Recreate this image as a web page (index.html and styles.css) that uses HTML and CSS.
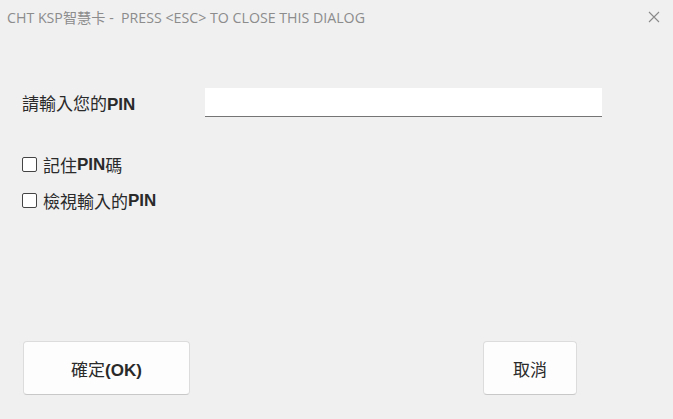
FILE: index.html
```html
<!DOCTYPE html>
<html lang="zh-Hant">
<head>
    <meta charset="UTF-8">
    <title>CHT KSP智慧卡</title>
    <link rel="stylesheet" href="styles.css">
</head>
<body>
    <div class="dialog">
        <div class="titlebar">
            <span class="title">CHT KSP智慧卡 -&nbsp; PRESS &lt;ESC&gt; TO CLOSE THIS DIALOG</span>
            <svg class="close" width="12" height="12" viewBox="0 0 12 12">
                <path d="M1 1L11 11M11 1L1 11" stroke="#8a8a8a" stroke-width="1.1" fill="none"/>
            </svg>
        </div>

        <div class="content">
            <div class="pin-row">
                <label for="pin" class="pin-label">請輸入您的<span class="latin">PIN</span></label>
                <input type="password" id="pin" class="pin-input">
            </div>

            <div class="checks">
                <label class="check"><span class="box"></span>記住<span class="latin">PIN</span>碼</label>
                <label class="check"><span class="box"></span>檢視輸入的<span class="latin">PIN</span></label>
            </div>
        </div>

        <div class="actions">
            <button type="button" class="btn btn-ok">確定<span class="latin">(OK)</span></button>
            <button type="button" class="btn btn-cancel">取消</button>
        </div>
    </div>
</body>
</html>
```

FILE: styles.css
```css
body {
    margin: 0;
    padding: 0;
    background-color: #f0f0f1;
    font-family: "Liberation Sans", "Noto Sans CJK TC", sans-serif;
    color: #1a1a1a;
}

.dialog {
    width: 673px;
    height: 419px;
    display: flex;
    flex-direction: column;
}

.titlebar {
    height: 34px;
    display: flex;
    align-items: center;
    justify-content: space-between;
    padding: 0 13px 0 7px;
}

.title {
    font-family: "Open Sans", "Noto Sans CJK TC", sans-serif;
    font-size: 14.2px;
    color: #8c8c8c;
}

.latin {
    font-weight: bold;
}

.content {
    flex: 1;
    padding: 54px 0 0 22px;
}

.pin-row {
    display: flex;
    align-items: center;
}

.pin-label {
    width: 183px;
    font-size: 17px;
    color: #2a2a2a;
}

.pin-input {
    width: 397px;
    height: 29px;
    box-sizing: border-box;
    border: none;
    border-bottom: 1px solid #757575;
    background: #ffffff;
    outline: none;
    padding: 0 6px;
}

.checks {
    margin-top: 37px;
    display: flex;
    flex-direction: column;
    gap: 15px;
}

.check {
    display: flex;
    align-items: center;
    font-size: 17px;
    height: 21px;
    color: #2a2a2a;
}

.box {
    width: 13px;
    height: 13px;
    border: 1px solid #444444;
    border-radius: 2px;
    background: #ffffff;
    margin-right: 6px;
}

.actions {
    display: flex;
    justify-content: space-between;
    padding: 0 96px 24px 23px;
}

.btn {
    height: 54px;
    background: #fdfdfd;
    border: 1px solid #dcdcdc;
    border-bottom-color: #c8c8c8;
    border-radius: 4px;
    font-family: "Liberation Sans", "Noto Sans CJK TC", sans-serif;
    font-size: 17px;
    color: #2a2a2a;
}

.btn-ok {
    width: 167px;
}

.btn-cancel {
    width: 94px;
}
```
